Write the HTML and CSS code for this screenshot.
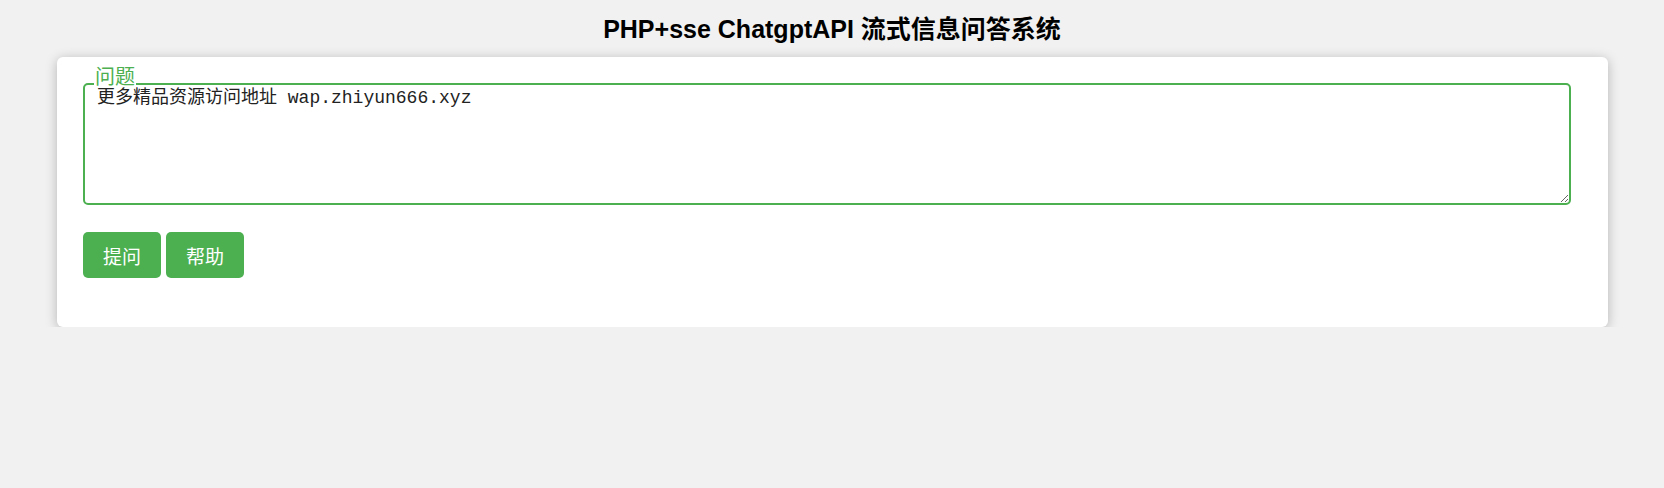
FILE: index.html
```html
<!DOCTYPE html>
<html lang="zh-CN">
<head>
    <meta charset="UTF-8">
    <meta name="viewport" content="width=device-width, initial-scale=1.0">
    <title>PHP+sse ChatgptAPI 流式信息问答系统</title>
    <link rel="stylesheet" href="styles.css">
</head>
<body>
    <h1 class="title">PHP+sse ChatgptAPI 流式信息问答系统</h1>

    <div class="card">
        <div class="field">
            <label for="question" class="field-label">问题</label>
            <textarea id="question" class="question">更多精品资源访问地址 wap.zhiyun666.xyz</textarea>
        </div>

        <div class="actions">
            <button class="btn" id="ask">提问</button>
            <button class="btn" id="help">帮助</button>
        </div>
    </div>
</body>
</html>
```

FILE: styles.css
```css
* {
    margin: 0;
    padding: 0;
    box-sizing: border-box;
}

body {
    background-color: #f1f1f1;
    font-family: "Liberation Sans", "Noto Sans CJK SC", sans-serif;
    padding-top: 14px;
}

.title {
    font-size: 25px;
    font-weight: bold;
    line-height: 30px;
    text-align: center;
    color: #000;
}

.card {
    margin: 13px 56px 0 57px;
    padding: 26px 37px 49px 26px;
    background: #fff;
    border-radius: 6px;
    box-shadow: 0 2px 12px rgba(0, 0, 0, 0.25);
}

.field {
    position: relative;
}

.field-label {
    position: absolute;
    top: -16px;
    left: 11px;
    padding: 0 1px;
    font-size: 20px;
    line-height: 20px;
    color: #4caf50;
    background: #fff;
}

.question {
    display: block;
    width: 100%;
    height: 122px;
    padding: 3px 12px 1px;
    border: 2px solid #4caf50;
    border-radius: 5px;
    font-family: "Liberation Mono", "Noto Sans CJK SC", monospace;
    font-size: 18px;
    line-height: 20px;
    color: #222;
    outline: none;
    resize: vertical;
}

.actions {
    display: flex;
    gap: 5px;
    margin-top: 27px;
}

.btn {
    width: 78px;
    height: 46px;
    border: none;
    border-radius: 5px;
    background-color: #4caf50;
    color: #fff;
    font-family: "Noto Sans CJK SC", sans-serif;
    font-size: 19px;
    cursor: pointer;
}
```
